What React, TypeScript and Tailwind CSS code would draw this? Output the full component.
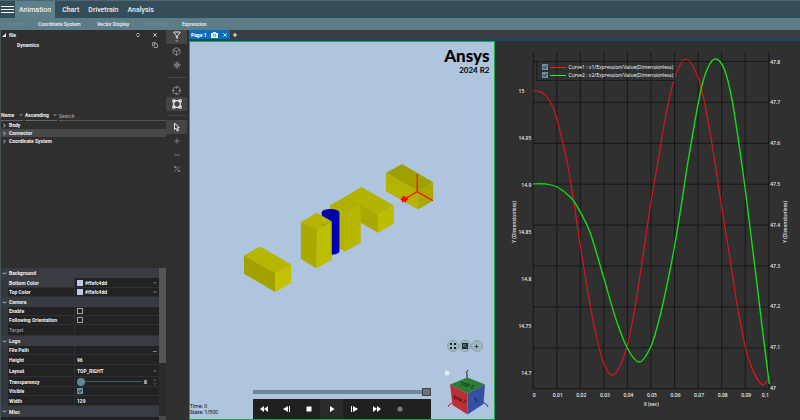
import { useState } from 'react';
import type { ReactNode } from 'react';
import {
  Box, ChevronDown, ChevronRight, ChevronUp, ChevronsUpDown, Copy, Crosshair, Filter,
  Minus, Percent, Plus, Sun, VectorSquare, X,
} from 'lucide-react';

type Point = [number, number];

const TABS = ['Animation', 'Chart', 'Drivetrain', 'Analysis'];

const CURVE_1: Point[] = [
  [533, 91], [541, 92], [549, 100], [556, 117], [566, 158], [573, 198], [580, 245], [591, 311], [602, 359],
  [613, 375], [625, 352], [635, 306], [650, 207], [658, 160], [666, 113], [675, 76], [686, 59], [698, 78],
  [705, 106], [714, 158], [722, 211], [730, 260], [738, 311], [748, 358], [761, 384], [769, 377],
];

const CURVE_2: Point[] = [
  [533, 184], [545, 184], [557, 187], [571, 198], [580, 212], [590, 233], [603, 276], [615, 317], [627, 348],
  [639, 362], [650, 348], [658, 323], [665, 293], [674, 248], [682, 199], [688, 160], [700, 93], [707, 69],
  [715, 59], [724, 69], [732, 101], [741, 160], [748, 213], [755, 270], [763, 336], [769, 384],
];

function smooth(pts: Point[]) {
  let d = `M${pts[0][0]} ${pts[0][1]}`;
  for (let i = 0; i < pts.length - 1; i++) {
    const p0 = pts[i - 1] ?? pts[i];
    const p1 = pts[i];
    const p2 = pts[i + 1];
    const p3 = pts[i + 2] ?? p2;
    d += `C${p1[0] + (p2[0] - p0[0]) / 6} ${p1[1] + (p2[1] - p0[1]) / 6} ${p2[0] - (p3[0] - p1[0]) / 6} ${p2[1] - (p3[1] - p1[1]) / 6} ${p2[0]} ${p2[1]}`;
  }
  return d;
}

export default function App() {
  return (
    <div className="flex h-screen flex-col overflow-hidden bg-[#2f2f2f] font-['Roboto',sans-serif] text-[5px] leading-[8px] font-bold text-[#f2f2f2]">
      <Header />
      <div className="flex min-h-0 flex-1">
        <Sidebar />
        <Toolbar />
        <main className="flex min-w-0 flex-1 flex-col pl-[2px]">
          <PageTabs />
          <div className="grid min-h-0 flex-1 grid-cols-2">
            <Viewport />
            <ChartPane />
          </div>
        </main>
      </div>
    </div>
  );
}

function Header() {
  const [tab, setTab] = useState('Animation');
  return (
    <header className="shrink-0 font-medium">
      <nav className="flex h-[18px] items-stretch border-t border-[#4d6872] bg-[#344e59] text-[7px] text-[#e8eef0]">
        <button aria-label="Menu" className="flex w-[15px] flex-col justify-center gap-[2px] px-[1px]">
          <span className="h-px w-full bg-white" />
          <span className="h-px w-full bg-white" />
          <span className="h-px w-full bg-white" />
        </button>
        {TABS.map(t => (
          <button
            key={t}
            onClick={() => setTab(t)}
            className={`px-[4px] ${t === tab ? 'mr-[3px] bg-[#5d7f8d]' : 'mr-[1px]'}`}
          >
            {t}
          </button>
        ))}
      </nav>
      <div className="flex h-[12px] items-center bg-[#5d7c89] pl-[7px] text-[#f2f6f7]">
        <button className="w-[31px] text-left text-[#6f8d99]" disabled>Contour</button>
        <button className="w-[59px] text-left">Coordinate System</button>
        <button className="w-[48px] text-left">Vector Display</button>
        <button className="w-[37px] text-left text-[#6f8d99]" disabled>Recording</button>
        <button>Expression</button>
      </div>
    </header>
  );
}

function Sidebar() {
  return (
    <aside className="flex w-[166px] shrink-0 flex-col border-l border-[#45545b]">
      <div className="h-[80px] shrink-0">
        <div className="flex h-[10px] items-center pl-[1px]">
          <svg viewBox="0 0 4 4" className="mr-[3px] size-[4px]"><path d="M4 0v4H0z" fill="#ddd" /></svg>
          <span className="flex-1">file</span>
          <button aria-label="Refresh" className="mr-[11px]"><ChevronsUpDown className="size-[6px]" strokeWidth={3} /></button>
          <button aria-label="Close" className="mr-[8px]"><X className="size-[6px]" strokeWidth={3} /></button>
        </div>
        <div className="flex h-[10px] items-center pl-[16px]">
          <span className="flex-1">Dynamics</span>
          <button aria-label="Copy" className="mr-[8px]"><Copy className="size-[6px]" /></button>
        </div>
      </div>

      <div className="flex h-[11px] shrink-0 items-stretch gap-[2px]">
        <Picker label="Sort field" value="Name" width="w-[18px]" />
        <Picker label="Sort order" value="Ascending" width="w-[28px]" />
        <input
          aria-label="Search"
          placeholder="Search"
          className="min-w-0 flex-1 border-b border-[#555] bg-transparent pt-[2px] font-medium outline-none placeholder:text-[#a0a0a0]"
        />
      </div>
      <ul className="shrink-0">
        {['Body', 'Connector', 'Coordinate System'].map(name => (
          <li key={name} className={`flex h-[8px] items-center ${name === 'Connector' ? 'bg-[#484848]' : ''}`}>
            <button className="flex items-center gap-[2px] pl-[1px]">
              <ChevronRight className="size-[5px]" strokeWidth={4} />
              {name}
            </button>
          </li>
        ))}
      </ul>

      <div className="flex-1" />
      <Properties />
    </aside>
  );
}

function Picker({ label, value, width }: { label: string; value: string; width: string }) {
  return (
    <label className="flex items-center border-b border-[#666]">
      <select aria-label={label} className={`appearance-none bg-transparent outline-none ${width}`}>
        <option>{value}</option>
      </select>
      <ChevronDown className="size-[4px]" strokeWidth={4} />
    </label>
  );
}

function Group({ name, height }: { name: string; height: string }) {
  return (
    <h3 className={`flex shrink-0 items-center bg-[#383b41] ${height}`}>
      <ChevronDown className="mx-[1px] mr-[2px] size-[5px]" strokeWidth={4} />
      {name}
    </h3>
  );
}

function Field({ id, name, height = 'h-[10px]', active, muted, children }: {
  id: string; name: string; height?: string; active?: boolean; muted?: boolean; children?: ReactNode;
}) {
  return (
    <div className={`flex shrink-0 items-stretch bg-[#222224] ${height}`}>
      <span className="w-[7px] bg-[#34373c]" />
      <label
        htmlFor={id}
        className={`flex w-[67px] items-center border-r border-b border-[#303032] pl-px ${active ? 'bg-[#3b3d42]' : ''} ${muted ? 'font-medium text-[#9a9a9a]' : ''}`}
      >
        {name}
      </label>
      <div className="flex min-w-0 flex-1 items-center border-b border-[#303032] pr-[2px] pl-[2px]">{children}</div>
    </div>
  );
}

function SelectValue({ id, value, swatch }: { id: string; value: string; swatch?: boolean }) {
  return (
    <>
      {swatch && <span className="mr-[2px] size-[6px] bg-[#bccbe6]" />}
      <select id={id} className="min-w-0 flex-1 appearance-none bg-transparent outline-none">
        <option>{value}</option>
      </select>
      <ChevronDown className="size-[4px]" strokeWidth={3} />
    </>
  );
}

function Check({ id, checked }: { id?: string; checked?: boolean }) {
  const [on, setOn] = useState(!!checked);
  return (
    <span className="grid size-[6px] place-items-center">
      <input
        id={id}
        type="checkbox"
        checked={on}
        onChange={e => setOn(e.target.checked)}
        className="col-start-1 row-start-1 size-[6px] appearance-none border border-[#a0a0a0] checked:border-[#6b93a5] checked:bg-[#5f8799]"
      />
      {on && (
        <svg viewBox="0 0 6 6" className="pointer-events-none col-start-1 row-start-1 size-[6px]">
          <path d="M1.3 3l1.2 1.3L4.8 1.7" fill="none" stroke="#1e2c33" />
        </svg>
      )}
    </span>
  );
}

function Properties() {
  return (
    <section className="flex h-[152px] shrink-0 overflow-hidden">
      <div className="flex min-w-0 flex-1 flex-col">
        <Group name="Background" height="h-[10px]" />
        <Field id="bottom" name="Bottom Color" active><SelectValue id="bottom" value="#ffafc4dd" swatch /></Field>
        <Field id="top" name="Top Color" height="h-[9px]"><SelectValue id="top" value="#ffafc4dd" swatch /></Field>
        <Group name="Camera" height="h-[10px]" />
        <Field id="enable" name="Enable" height="h-[9px]"><Check id="enable" /></Field>
        <Field id="follow" name="Following Orientation" height="h-[9px]"><Check id="follow" /></Field>
        <Field id="target" name="Target" height="h-[11px]" muted>
          <input id="target" disabled className="w-full min-w-0 bg-transparent" />
        </Field>
        <Group name="Logo" height="h-[10px]" />
        <Field id="path" name="File Path" height="h-[9px]">
          <input id="path" className="min-w-0 flex-1 bg-transparent outline-none" />
          <button aria-label="Browse">...</button>
        </Field>
        <Field id="height" name="Height">
          <input id="height" defaultValue="96" className="w-full min-w-0 bg-transparent outline-none" />
        </Field>
        <Field id="layout" name="Layout" height="h-[12px]"><SelectValue id="layout" value="TOP_RIGHT" /></Field>
        <Field id="transparency" name="Transparency">
          <input
            id="transparency"
            type="range"
            defaultValue={0}
            className="h-[8px] w-[65px] appearance-none bg-[linear-gradient(#3f5a66,#3f5a66)] bg-[length:100%_1px] bg-center bg-no-repeat [&::-webkit-slider-thumb]:size-[8px] [&::-webkit-slider-thumb]:appearance-none [&::-webkit-slider-thumb]:rounded-full [&::-webkit-slider-thumb]:bg-[#5f8797]"
          />
          <span className="ml-[2px] flex-1">0</span>
          <span className="flex flex-col">
            <ChevronUp className="size-[4px]" />
            <ChevronDown className="size-[4px]" />
          </span>
        </Field>
        <Field id="visible" name="Visible" height="h-[9px]"><Check id="visible" checked /></Field>
        <Field id="width" name="Width">
          <input id="width" defaultValue="129" className="w-full min-w-0 bg-transparent outline-none" />
        </Field>
        <Group name="Misc" height="h-[11px]" />
        <div className="h-[4px] shrink-0 bg-[#222224]" />
      </div>
      <div className="flex w-[7px] flex-col justify-between bg-[#2b2b2b]">
        <div className="h-[95px] bg-[#555]" />
        <div className="h-[4px] bg-[#4a4a4a]" />
      </div>
    </section>
  );
}

function Tool({ label, on, children }: { label: string; on?: boolean; children: ReactNode }) {
  return (
    <button
      aria-label={label}
      className={`flex h-[14px] w-full shrink-0 flex-col items-center justify-center ${on ? 'bg-[#454545] text-[#e8e8e8]' : 'text-[#a2a2a2]'}`}
    >
      {children}
    </button>
  );
}

function Toolbar() {
  return (
    <div className="flex w-[21px] shrink-0 flex-col items-center">
      <Tool label="Filter" on>
        <Filter className="size-[8px]" strokeWidth={3} />
        <ChevronDown className="size-[4px]" strokeWidth={4} />
      </Tool>
      <Tool label="View"><Box className="size-[9px]" /></Tool>
      <Tool label="Light"><Sun className="size-[8px]" strokeWidth={3} /></Tool>
      <hr className="my-[5px] w-[18px] border-[#484848]" />
      <Tool label="Center"><Crosshair className="size-[9px]" /></Tool>
      <Tool label="Fit" on><VectorSquare className="size-[10px]" strokeWidth={3} /></Tool>
      <hr className="my-[4px] w-[18px] border-[#484848]" />
      <Tool label="Select" on>
        <svg viewBox="0 0 8 10" className="h-[10px] w-[8px]" fill="none" stroke="currentColor">
          <path d="M1.500 1v6.500L3 6.300l1.300 2.900 1.300-.6-1.300-2.800h2z" />
        </svg>
      </Tool>
      <Tool label="Zoom in"><Plus className="size-[8px]" /></Tool>
      <Tool label="Zoom out"><Minus className="size-[8px]" /></Tool>
      <Tool label="Scale"><Percent className="size-[8px]" /></Tool>
    </div>
  );
}

function PageTabs() {
  return (
    <div className="flex h-[11px] shrink-0 items-stretch border-b-2 border-[#17486b] bg-[#3a3b40]">
      <div className="flex items-center gap-[4px] bg-[#0b6cb8] px-[2px] text-white">
        <span>Page 1</span>
        <svg viewBox="0 0 7 6" className="h-[6px] w-[7px]">
          <path d="M0 1h2l.5-1h2L5 1h2v5H0z" fill="#fff" />
          <circle cx="3.500" cy="3.300" r="1.300" fill="none" stroke="#0b6cb8" strokeWidth=".8" />
        </svg>
        <button aria-label="Close page"><X className="size-[6px]" strokeWidth={3} /></button>
      </div>
      <button aria-label="Add page" className="px-[2px]"><Plus className="size-[6px]" strokeWidth={4} /></button>
    </div>
  );
}

function Scene() {
  return (
    <svg viewBox="190 42 304 378" className="absolute inset-0 h-full w-full">
      <g transform="translate(240 150) scale(.3333)">
        <path d="M12 318l48-27 94 54-48 27z" fill="#b6b600" />
        <path d="M12 318l94 54v56l-94-55z" fill="#a1a100" />
        <path d="M106 372l48-27v55l-48 28z" fill="#c2c200" />

        <path d="M318 140l47-28 98 56-48 27z" fill="#b2b200" />
        <path d="M350 157l65 38v55l-65-38z" fill="#a9a900" />
        <path d="M415 195l48-27v54l-48 28z" fill="#bcbc00" />

        <path d="M270 168l48-28 45 23-47 29z" fill="#afaf00" />
        <path d="M270 168l46 24v114l-46-24z" fill="#b3b300" />
        <path d="M316 192l47-29v117l-47 26z" fill="#b6b600" />

        <path d="M246 190v116a27 12 0 0 0 53 0V190z" fill="#0000ba" />
        <ellipse cx="272" cy="190" rx="27" ry="12" fill="#0000a0" />

        <path d="M183 218l48-28 45 25-44 23z" fill="#b4b400" />
        <path d="M183 218l49 20-2 119-47-29z" fill="#a9a900" />
        <path d="M232 238l44-23v115l-46 27z" fill="#bebe00" />

        <path d="M439 70l48-27 94 55-45 27z" fill="#a0a000" />
        <path d="M439 70l97 55v55l-97-55z" fill="#b3b300" />
        <path d="M536 125l45-27v55l-45 27z" fill="#a9a900" />
        <path d="M533 72v54l47 27M533 126l-38 23" fill="none" stroke="#ff1800" strokeWidth="4" />
        <path d="M495 139l3 5 6-3-1 6 4 4-6 2-3 7-5-4-6 3v-6l-5-5 6-3 1-5z" fill="#ff0000" />
      </g>
    </svg>
  );
}

function ViewCube() {
  return (
    <svg viewBox="445 366 45 50" className="h-[50px] w-[45px]">
      <circle cx="447" cy="373" r="2.6" fill="#e6e9ec" />
      <path d="M467 378v-5m-1 0l2-3" stroke="#222" fill="none" />
      <path d="M453 402l-4 3-1 2" stroke="#c01830" fill="none" />
      <path d="M483 402l4 3 1 2" stroke="#2230a0" fill="none" />
      <path d="M467.500 377.500l17.500 7-17.500 9-17.500-9z" fill="#2c7d35" />
      <path d="M450 384.500l17.500 9v21l-15-9.500z" fill="#bb3038" />
      <path d="M467.500 393.500l17.500-9-1.500 19.500-16 10.500z" fill="#34519f" />
      <text x="467" y="387" fontSize="5" fill="#14351a" textAnchor="middle" transform="rotate(14 467 386)">TOP Z</text>
      <text x="459" y="401" fontSize="5" fill="#4a0f16" textAnchor="middle" transform="rotate(24 459 400)">Side 2</text>
      <text x="476" y="402" fontSize="6" fill="#101d4d" textAnchor="middle" transform="rotate(-20 476 400)">1</text>
    </svg>
  );
}

const PLAYER: { label: string; icon: ReactNode }[] = [
  { label: 'Rewind', icon: <path d="M5 2v6L1 5zM9 2v6L5 5z" /> },
  { label: 'Step back', icon: <path d="M6 2v6L1 5zM7 2h1v6H7z" /> },
  { label: 'Stop', icon: <path d="M2.500 2.500h5v5h-5z" /> },
  { label: 'Play', icon: <path d="M3 2v6l4.500-3z" /> },
  { label: 'Step forward', icon: <path d="M4 2v6l5-3zM2 2h1v6H2z" /> },
  { label: 'Fast forward', icon: <path d="M1 2v6l4-3zM5 2v6l4-3z" /> },
  { label: 'Record', icon: <circle cx="5" cy="5" r="2.600" fill="#777" /> },
];

function Viewport() {
  return (
    <section className="relative overflow-hidden border border-[#16a840] bg-[#afc4dd] text-black">
      <Scene />
      <div className="absolute top-[4px] right-[4px] text-right font-['Lato',sans-serif]">
        <div className="text-[17px] leading-[19px] font-black">Ansys</div>
        <div className="text-[8px] leading-[10px] font-bold">2024 R2</div>
      </div>
      <div className="absolute right-[11px] bottom-[67px] flex text-[#1c2b30]">
        <button aria-label="Fit view" className="grid size-[12px] place-items-center rounded-full border border-[#8aa4ad] bg-[#9fb7c2]">
          <svg viewBox="0 0 6 6" className="size-[6px]"><path d="M0 0h2v2H0zM4 0h2v2H4zM0 4h2v2H0zM4 4h2v2H4z" fill="currentColor" /></svg>
        </button>
        <button aria-label="Zoom window" className="grid size-[12px] place-items-center rounded-full border border-[#8aa4ad] bg-[#9fb7c2]">
          <svg viewBox="0 0 6 6" className="size-[6px]"><path d="M0 0h6v6H0z" fill="currentColor" /><path d="M1.500 1.500h2v2h-2zM3.500 3.500l1.500 1.500" stroke="#8aa4ad" strokeWidth=".6" fill="none" /></svg>
        </button>
        <button aria-label="Add view" className="grid size-[12px] place-items-center rounded-full border border-[#8aa4ad] bg-[#9fb7c2]">
          <Plus className="size-[5px]" strokeWidth={4} />
        </button>
      </div>
      <div className="absolute right-[4px] bottom-[3px]"><ViewCube /></div>
      <div className="absolute bottom-[4px] left-0 font-['Noto_Sans',sans-serif] leading-[6px] font-normal">
        <div>Time: 0</div>
        <div>State: 1/500</div>
      </div>
      <div className="absolute bottom-0 left-1/2 w-[178px] -translate-x-1/2">
        <input
          type="range"
          aria-label="Frame"
          defaultValue={100}
          className="block h-[8px] w-full appearance-none bg-[linear-gradient(#6f84a0,#6f84a0)] bg-[length:100%_4px] bg-center bg-no-repeat [&::-webkit-slider-thumb]:h-[8px] [&::-webkit-slider-thumb]:w-[9px] [&::-webkit-slider-thumb]:appearance-none [&::-webkit-slider-thumb]:border [&::-webkit-slider-thumb]:border-[#444] [&::-webkit-slider-thumb]:bg-[#69707a]"
        />
        <div className="mt-[3px] flex h-[20px] bg-[#202020] pr-[20px] text-white">
          {PLAYER.map(({ label, icon }) => (
            <button
              key={label}
              aria-label={label}
              className={`grid flex-1 place-items-center ${label === 'Play' ? 'bg-[#2a2a2a]' : ''}`}
            >
              <svg viewBox="0 0 10 10" className="size-[10px]" fill="currentColor">{icon}</svg>
            </button>
          ))}
        </div>
      </div>
    </section>
  );
}

function ChartPane() {
  const left = ['15', '14.95', '14.9', '14.85', '14.8', '14.75', '14.7'];
  const right = ['47.8', '47.7', '47.6', '47.5', '47.4', '47.3', '47.2', '47.1', '47'];
  const bottom = ['0', '0.01', '0.02', '0.03', '0.04', '0.05', '0.06', '0.07', '0.08', '0.09', '0.1'];
  return (
    <section className="relative overflow-hidden bg-[#303030]">
      <svg
        viewBox="495 41 305 379"
        className="absolute inset-0 h-full w-full font-['Noto_Sans',sans-serif] text-[5px] font-medium"
        fill="#f0f0f0"
      >
        {bottom.map((t, i) => (
          <g key={t}>
            <path d={`M${533 + i * 23.55} 52V389`} stroke="#171717" />
            <text x={i === 10 ? 765 : 534 + i * 23.55} y="397" textAnchor="middle">{t}</text>
          </g>
        ))}
        {right.map((t, i) => (
          <g key={t}>
            <path d={`M533 ${61.5 + i * 40.9}H769`} stroke="#171717" />
            <text x="770" y={63.5 + i * 40.8}>{t}</text>
          </g>
        ))}
        {left.map((t, i) => (
          <text key={t} x={t === '15' ? 524 : 531} y={93 + i * 47} textAnchor="end">{t}</text>
        ))}
        <text x="651" y="406" textAnchor="middle">X (sec)</text>
        <text x="516" y="222" textAnchor="middle" transform="rotate(-90 516 222)">Y (Dimensionless)</text>
        <text x="787" y="222" textAnchor="middle" transform="rotate(-90 787 222)">Y (Dimensionless)</text>
        <path d={smooth(CURVE_1)} fill="none" stroke="#dc141c" strokeWidth="1.2" />
        <path d={smooth(CURVE_2)} fill="none" stroke="#14dc14" strokeWidth="1.4" />
      </svg>
      <div className="absolute top-[20px] left-[41px] border border-[#1c1c1c] py-[1px] pr-[1px] pl-[5px] font-['Open_Sans',sans-serif] font-medium text-white">
        <label className="flex h-[8px] items-center gap-[2px]">
          <Check checked />
          <span className="mr-[1px] h-px w-[16px] bg-[#ff1a22]" />
          Curve1 : x1/Expression/Value(Dimensionless)
        </label>
        <label className="flex h-[8px] items-center gap-[2px]">
          <Check checked />
          <span className="mr-[1px] h-px w-[16px] bg-[#18ff18]" />
          Curve2 : x2/Expression/Value(Dimensionless)
        </label>
      </div>
    </section>
  );
}
